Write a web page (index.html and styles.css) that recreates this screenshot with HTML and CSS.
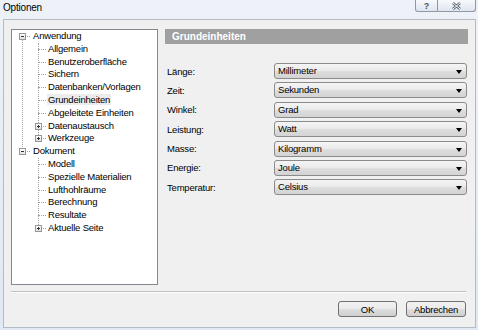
FILE: index.html
```html
<!DOCTYPE html>
<html lang="de">
<head>
    <meta charset="UTF-8">
    <title>Optionen</title>
    <link rel="stylesheet" href="styles.css">
</head>
<body>
    <div class="window">
        <div class="titlebar">
            <span class="title">Optionen</span>
            <div class="caption">
                <span class="cbtn help">?</span>
                <span class="cbtn close">
                    <svg width="9" height="8" viewBox="0 0 9 8">
                        <path d="M1 1 L8 7 M8 1 L1 7" stroke="#55606e" stroke-width="2.4" fill="none"/>
                        <path d="M1 1 L8 7 M8 1 L1 7" stroke="#fff" stroke-width="1" fill="none"/>
                    </svg>
                </span>
            </div>
        </div>

        <div class="client">
            <div class="main">
                <!-- navigation tree -->
                <div class="tree">
                    <ul class="lvl0">
                        <li>
                            <div class="row"><span class="box minus"></span><span class="txt">Anwendung</span></div>
                            <ul class="lvl1">
                                <li><div class="row"><span class="txt">Allgemein</span></div></li>
                                <li><div class="row"><span class="txt">Benutzeroberfläche</span></div></li>
                                <li><div class="row"><span class="txt">Sichern</span></div></li>
                                <li><div class="row"><span class="txt">Datenbanken/Vorlagen</span></div></li>
                                <li><div class="row"><span class="txt selected">Grundeinheiten</span></div></li>
                                <li><div class="row"><span class="txt">Abgeleitete Einheiten</span></div></li>
                                <li><div class="row"><span class="box plus"></span><span class="txt">Datenaustausch</span></div></li>
                                <li><div class="row"><span class="box plus"></span><span class="txt">Werkzeuge</span></div></li>
                            </ul>
                        </li>
                        <li>
                            <div class="row"><span class="box minus"></span><span class="txt">Dokument</span></div>
                            <ul class="lvl1">
                                <li><div class="row"><span class="txt">Modell</span></div></li>
                                <li><div class="row"><span class="txt">Spezielle Materialien</span></div></li>
                                <li><div class="row"><span class="txt">Lufthohlräume</span></div></li>
                                <li><div class="row"><span class="txt">Berechnung</span></div></li>
                                <li><div class="row"><span class="txt">Resultate</span></div></li>
                                <li><div class="row"><span class="box plus"></span><span class="txt">Aktuelle Seite</span></div></li>
                            </ul>
                        </li>
                    </ul>
                </div>

                <!-- settings page -->
                <div class="panel">
                    <div class="panel-header">Grundeinheiten</div>
                    <div class="units">
                        <label>Länge:</label>
                        <div class="combo">Millimeter</div>
                        <label>Zeit:</label>
                        <div class="combo">Sekunden</div>
                        <label>Winkel:</label>
                        <div class="combo">Grad</div>
                        <label>Leistung:</label>
                        <div class="combo">Watt</div>
                        <label>Masse:</label>
                        <div class="combo">Kilogramm</div>
                        <label>Energie:</label>
                        <div class="combo">Joule</div>
                        <label>Temperatur:</label>
                        <div class="combo">Celsius</div>
                    </div>
                </div>
            </div>

            <div class="separator"></div>

            <div class="buttons">
                <button class="ok">OK</button>
                <button class="cancel">Abbrechen</button>
            </div>
        </div>
    </div>
</body>
</html>
```

FILE: styles.css
```css
body {
    margin: 0;
    font-family: "Liberation Sans", Arial, sans-serif;
    font-size: 9.5px;
    letter-spacing: -0.2px;
    color: #000;
}

.window {
    width: 478px;
    height: 330px;
    background: linear-gradient(#eef2f8, #dfe8f3);
    display: flex;
    flex-direction: column;
}

.titlebar {
    height: 19px;
    display: flex;
    justify-content: space-between;
    flex-shrink: 0;
}

.title {
    padding-left: 3px;
    line-height: 15px;
    font-size: 10px;
}

.caption {
    display: flex;
    margin-right: 2px;
    align-self: flex-start;
}

.cbtn {
    height: 11px;
    border: 1px solid #8e98a6;
    border-top: none;
    background: linear-gradient(#f7f9fc, #dfe5ee);
    display: flex;
    align-items: center;
    justify-content: center;
}

.help {
    width: 21px;
    border-radius: 0 0 0 3px;
    font-weight: bold;
    font-size: 9px;
    color: #4a5563;
}

.close {
    width: 37px;
    border-left: none;
    border-radius: 0 0 3px 0;
}

.client {
    flex: 1;
    margin: 0 2px 2px 3px;
    border: 1px solid #b3bbc6;
    background-color: #f0f0f0;
    padding: 9px 7px 0 7px;
}

.main {
    display: flex;
    gap: 7px;
    height: 256px;
}

/* tree */
.tree {
    width: 147px;
    flex-shrink: 0;
    box-sizing: border-box;
    background-color: white;
    border: 1px solid #828790;
    overflow: hidden;
}

.tree ul {
    list-style: none;
    margin: 0;
    padding: 0;
    position: relative;
}

.tree li {
    position: relative;
}

.row {
    position: relative;
    height: 12.8px;
    line-height: 12.8px;
    white-space: nowrap;
}

.lvl0 > li > .row {
    padding-left: 20px;
}

.lvl1 > li > .row {
    padding-left: 35px;
}

.row::before {
    content: "";
    position: absolute;
    top: 6px;
    width: 8px;
    border-top: 1px dotted #a0a0a0;
}

.lvl0 > li > .row::before {
    left: 10px;
}

.lvl1 > li > .row::before {
    left: 26px;
}

.lvl1::before {
    content: "";
    position: absolute;
    left: 26px;
    top: 0;
    bottom: 6px;
    border-left: 1px dotted #a0a0a0;
}

.lvl0 > li:not(:last-child)::before {
    content: "";
    position: absolute;
    left: 10px;
    top: 6px;
    bottom: -6px;
    border-left: 1px dotted #a0a0a0;
}

.box {
    position: absolute;
    top: 3px;
    width: 7px;
    height: 7px;
    box-sizing: border-box;
    border: 1px solid #979797;
    background: linear-gradient(#ffffff, #e2e2e2);
    z-index: 1;
}

.lvl0 > li > .row .box {
    left: 7px;
}

.lvl1 > li > .row .box {
    left: 23px;
}

.box::after {
    content: "";
    position: absolute;
    left: 1px;
    top: 2px;
    width: 3px;
    height: 1px;
    background-color: #333;
}

.plus::before {
    content: "";
    position: absolute;
    left: 2px;
    top: 1px;
    width: 1px;
    height: 3px;
    background-color: #333;
}

.txt {
    padding: 0 1px;
}

.selected {
    background-color: #ececec;
}

/* right side */
.panel {
    flex: 1;
}

.panel-header {
    height: 15px;
    line-height: 15px;
    background-color: #a0a0a0;
    color: white;
    font-weight: bold;
    font-size: 10px;
    letter-spacing: 0;
    padding-left: 7px;
}

.units {
    margin-top: 19px;
    margin-right: 1px;
    display: grid;
    grid-template-columns: 109px 1fr;
    grid-auto-rows: 16px;
    row-gap: 3.4px;
    align-items: center;
}

.units label {
    padding-left: 2px;
}

.combo {
    position: relative;
    height: 16px;
    line-height: 14px;
    box-sizing: border-box;
    border: 1px solid #8b8b8b;
    border-radius: 3px;
    padding-left: 3px;
    background: linear-gradient(#f5f5f5, #ebebeb 45%, #dddddd 55%, #d3d3d3);
}

.combo::after {
    content: "";
    position: absolute;
    right: 4px;
    top: 6px;
    border-left: 3.5px solid transparent;
    border-right: 3.5px solid transparent;
    border-top: 4px solid #000;
}

.separator {
    margin: 6px 2px 0 0;
    border-top: 1px solid #c0c0c0;
    border-bottom: 1px solid #ffffff;
}

.buttons {
    display: flex;
    justify-content: flex-end;
    gap: 9px;
    margin: 8px 2px 0 0;
}

button {
    height: 16px;
    padding: 0;
    font-family: "Liberation Sans", Arial, sans-serif;
    font-size: 9.5px;
    letter-spacing: -0.2px;
    color: #000;
    border: 1px solid #707070;
    border-radius: 3px;
    background: linear-gradient(#f2f2f2, #ebebeb 45%, #dddddd 55%, #cfcfcf);
}

.ok {
    width: 59px;
}

.cancel {
    width: 60px;
}
```
